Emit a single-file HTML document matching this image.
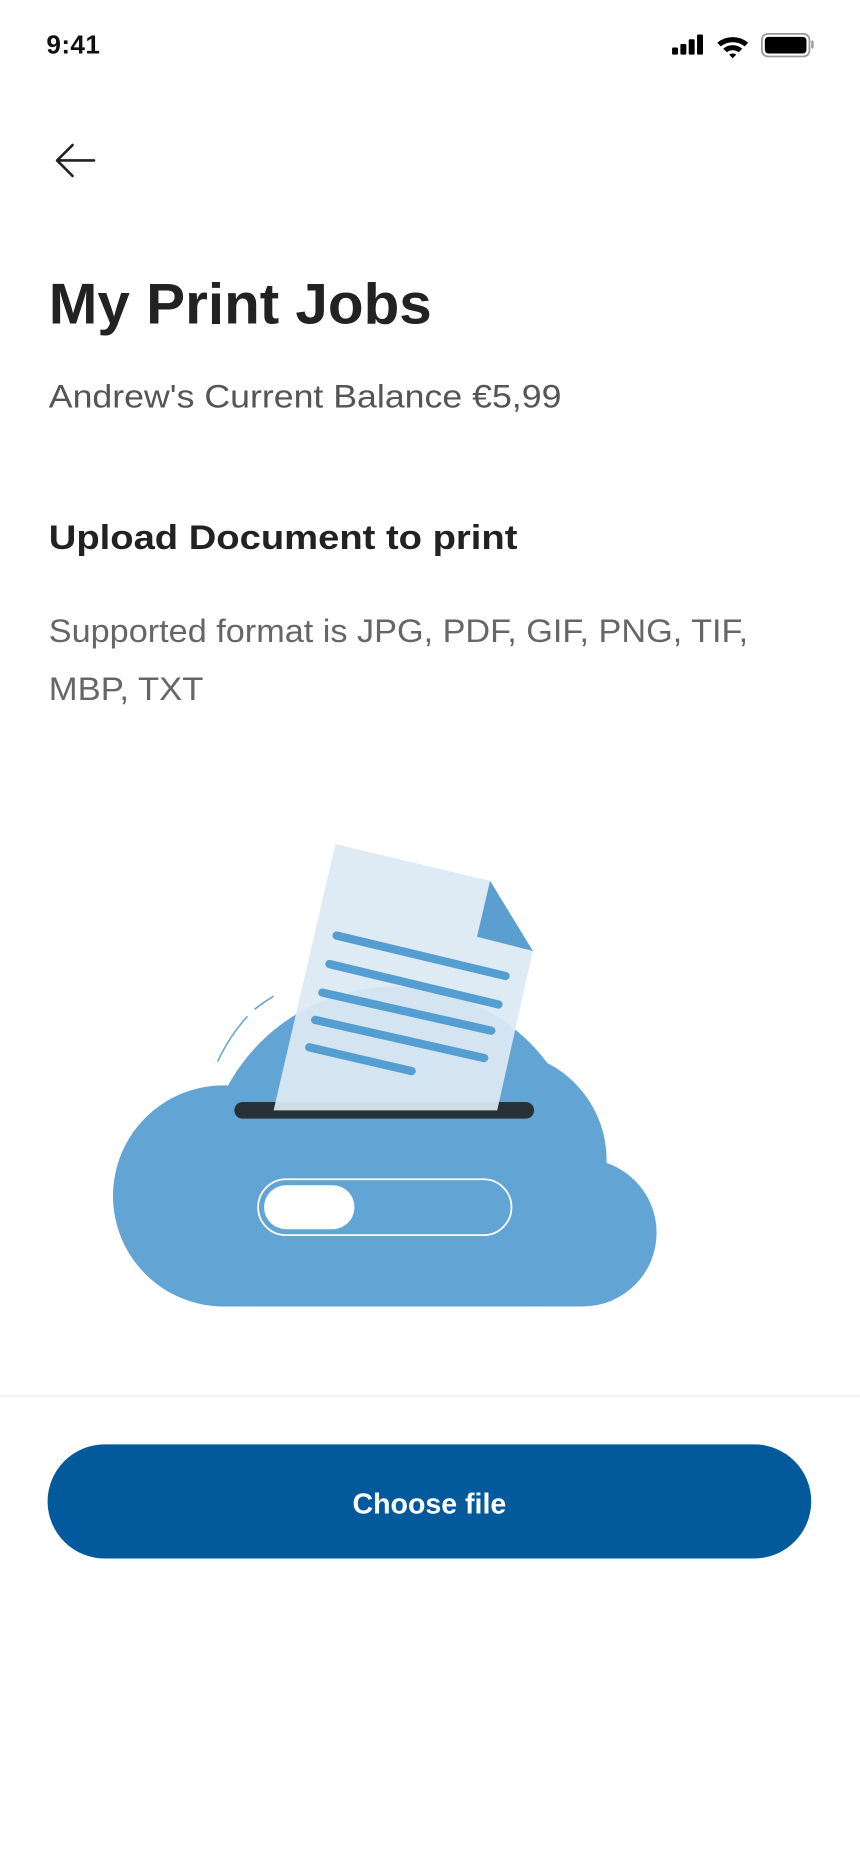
<!DOCTYPE html>
<html><head><meta charset="utf-8"><style>
html,body{margin:0;padding:0;background:#fff;}
svg{display:block;}
text{font-family:"Liberation Sans",sans-serif;}
</style></head><body>
<svg width="860" height="1864" viewBox="0 0 723 1568" preserveAspectRatio="none" xmlns="http://www.w3.org/2000/svg">
<text x="39" y="45" font-size="22" font-weight="bold" fill="#111" textLength="45">9:41</text>
<!-- signal -->
<rect x="565" y="40" width="5" height="6" rx="1" fill="#000"/>
<rect x="572" y="37" width="5" height="9" rx="1" fill="#000"/>
<rect x="579" y="33" width="5" height="13" rx="1" fill="#000"/>
<rect x="586" y="29" width="5" height="17" rx="1" fill="#000"/>
<!-- wifi -->
<path d="M603 36 A20 20 0 0 1 629 36 L626 39 A16 16 0 0 0 606 39Z M608 41 A12 12 0 0 1 624 41 L621 44 A8 8 0 0 0 611 44Z M613 46 L616 49 L619 46 A5 5 0 0 0 613 46Z" fill="#000"/>
<!-- battery -->
<rect x="640.5" y="28.5" width="40" height="19" rx="5" fill="none" stroke="#999" stroke-width="1.5"/>
<rect x="643" y="31" width="35" height="14" rx="3" fill="#000"/>
<rect x="682" y="34" width="2" height="7" rx="1" fill="#999"/>
<!-- back arrow -->
<path d="M79 135 H48 M61 122 L48 135 L61 148" fill="none" stroke="#222" stroke-width="2.2" stroke-linecap="round" stroke-linejoin="round"/>
<text x="41" y="272" font-size="48" font-weight="bold" fill="#222" textLength="322" lengthAdjust="spacingAndGlyphs">My Print Jobs</text>
<text x="41" y="343" font-size="27" fill="#555" textLength="431" lengthAdjust="spacingAndGlyphs">Andrew's Current Balance €5,99</text>
<text x="41" y="462" font-size="29" font-weight="bold" fill="#222" textLength="394" lengthAdjust="spacingAndGlyphs">Upload Document to print</text>
<text x="41" y="540" font-size="27" fill="#666" textLength="588" lengthAdjust="spacingAndGlyphs">Supported format is JPG, PDF, GIF, PNG, TIF,</text>
<text x="41" y="589" font-size="27" fill="#666" textLength="130" lengthAdjust="spacingAndGlyphs">MBP, TXT</text>
<!-- cloud -->
<defs><clipPath id="c"><rect x="0" y="0" width="723" height="1099"/></clipPath></defs>
<g fill="#62a4d4" clip-path="url(#c)">
<circle cx="188" cy="1006" r="93"/>
<circle cx="332" cy="990" r="160"/>
<circle cx="418" cy="976" r="92"/>
<circle cx="490" cy="1037" r="62"/>
<rect x="188" y="1000" width="302" height="99"/>
</g>
<path d="M183 893 A150 150 0 0 1 208 855 M214 849 A150 150 0 0 1 230 838" fill="none" stroke="#62a4d4" stroke-width="1.3"/>
<rect x="197" y="927" width="252" height="14" rx="7" fill="#263238"/>
<polygon points="282,710 412,741 448,800 418,934 230,934" fill="#dde9f3" fill-opacity="0.93"/>
<polygon points="412,741 448,800 401,788" fill="#5a9fd0"/>
<g stroke="#559ed2" stroke-width="7" stroke-linecap="round">
<line x1="283" y1="787" x2="425" y2="821"/>
<line x1="277" y1="811" x2="419" y2="845"/>
<line x1="271" y1="835" x2="413" y2="867"/>
<line x1="265" y1="858" x2="407" y2="890"/>
<line x1="260" y1="881" x2="346" y2="901"/>
</g>
<rect x="217" y="992" width="213" height="47" rx="23.5" fill="none" stroke="#fff" stroke-width="1.5"/>
<rect x="222" y="997" width="76" height="37" rx="18.5" fill="#fff"/>
<rect x="0" y="1174" width="723" height="1" fill="#ececec"/>
<rect x="40" y="1215" width="642" height="96" rx="48" fill="#025a9c"/>
<text x="361" y="1273" font-size="24" font-weight="bold" fill="#fff" text-anchor="middle">Choose file</text>
</svg>
</body></html>
